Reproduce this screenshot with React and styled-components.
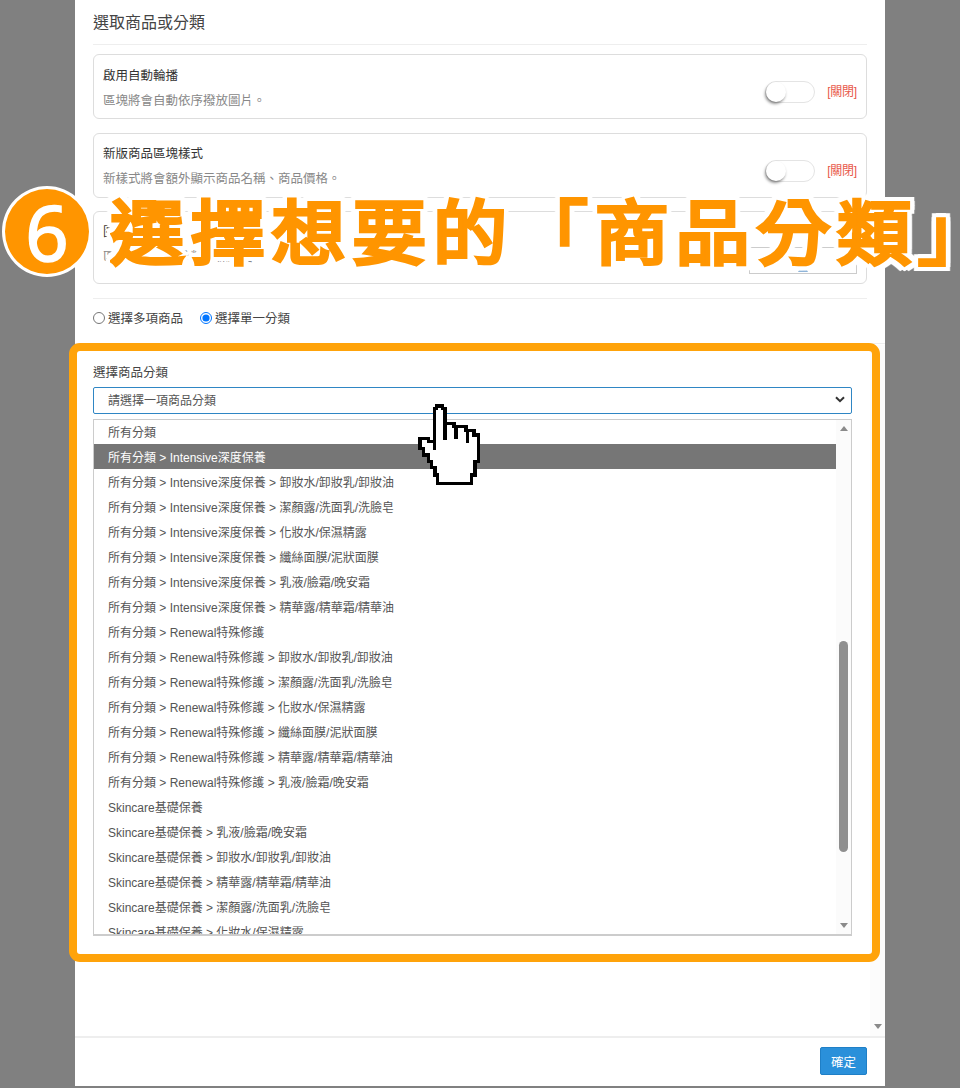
import React from "react";
import styled, { createGlobalStyle } from "styled-components";

const Global = createGlobalStyle`
  html, body { margin: 0; padding: 0; background: #808080; }
  body { width: 960px; height: 1088px; overflow: hidden; font-family: "Liberation Sans", "Noto Sans CJK TC", sans-serif; }
  * { box-sizing: border-box; }
`;

const Stage = styled.div`
  position: relative;
  width: 960px;
  height: 1088px;
  overflow: hidden;
  padding: 0 75px 2px;
`;
const Modal = styled.div`
  width: 810px;
  height: 1086px;
  background: #fff;
  display: flex;
  flex-direction: column;
`;
const Scroller = styled.div`
  flex: 1;
  min-height: 0;
  display: flex;
`;
const Body = styled.div`
  flex: 1;
  min-width: 0;
`;
const TopPane = styled.div`
  padding: 11px 18px 0;
  height: 344px;
  border-bottom: 1px solid #eee;
  margin-right: -15px;
`;
const TopInner = styled.div`
  width: 774px;
`;
const Title = styled.h2`
  margin: 0;
  height: 34px;
  font-size: 16px;
  line-height: 24px;
  font-weight: 400;
  color: #444;
  border-bottom: 1px solid #eee;
`;
const Card = styled.div`
  margin-top: ${(p) => p.$top}px;
  height: ${(p) => p.$h}px;
  border: 1px solid #ddd;
  border-radius: 6px;
  padding: ${(p) => p.$pad || 11}px 9px 0;
  display: flex;
  justify-content: space-between;
`;
const CardText = styled.div`
  font-size: 12.5px;
  line-height: 18px;
`;
const CardTitle = styled.div`
  color: #333;
`;
const CardDesc = styled.div`
  color: #888;
  margin-top: 7px;
`;
const ToggleWrap = styled.div`
  display: flex;
  align-items: center;
  gap: 12px;
  margin-top: ${(p) => p.$top}px;
  height: 22px;
`;
const Toggle = styled.div`
  width: 50px;
  height: 22px;
  border: 1px solid #e4e4e4;
  border-radius: 11px;
  background: #fff;
  display: flex;
`;
const Knob = styled.div`
  width: 20px;
  height: 20px;
  border-radius: 50%;
  background: #fff;
  box-shadow: -1px 2px 3px rgba(0, 0, 0, 0.45);
`;
const Off = styled.span`
  font-size: 12px;
  letter-spacing: -0.2px;
  line-height: 18px;
  color: #e8574a;
`;
const PickBox = styled.div`
  width: 108px;
  height: 27px;
  margin-top: 24px;
  border: 1px solid #ccc;
  display: flex;
  justify-content: center;
  align-items: flex-end;
`;
const Divider = styled.div`
  margin-top: 14px;
  border-top: 1px solid #eee;
`;
const RadioRow = styled.div`
  display: flex;
  gap: 17px;
  margin-top: 11px;
  height: 18px;
  align-items: center;
`;
const RadioLabel = styled.label`
  display: flex;
  align-items: center;
  gap: 3px;
  font-size: 12.5px;
  line-height: 18px;
  color: #444;
`;
const Radio = styled.input`
  margin: 0 0 2px;
  width: 12px;
  height: 12px;
`;
const Pane = styled.div`
  padding: 20px 18px 0;
`;
const FieldLabel = styled.div`
  font-size: 12.5px;
  line-height: 18px;
  color: #444;
`;
const Select = styled.div`
  margin-top: 5px;
  width: 759px;
  height: 27px;
  border: 1px solid #2f86c4;
  border-radius: 2px;
  padding: 0 6px 2px 14px;
  display: flex;
  align-items: center;
  justify-content: space-between;
  font-size: 12px;
  color: #555;
`;
const List = styled.div`
  margin-top: 5px;
  width: 759px;
  height: 517px;
  border: 1px solid #ccc;
  border-bottom-width: 2px;
  display: flex;
`;
const Options = styled.div`
  flex: 1;
  min-width: 0;
  overflow: hidden;
`;
const OptionStack = styled.div`
  margin-top: -1px;
`;
const Option = styled.div`
  height: 25px;
  line-height: 29px;
  padding-left: 14px;
  font-size: 12px;
  white-space: nowrap;
  overflow: hidden;
  color: ${(p) => (p.$active ? "#fff" : "#555")};
  background: ${(p) => (p.$active ? "#767676" : "transparent")};
`;
const Track = styled.div`
  width: 15px;
  background: #fbfbfb;
  display: flex;
  flex-direction: column;
  align-items: center;
  justify-content: space-between;
  padding: 6px 0;
  position: relative;
`;
const Arrow = styled.div`
  width: 0;
  height: 0;
  border-left: 4.5px solid transparent;
  border-right: 4.5px solid transparent;
  ${(p) => (p.$up ? "border-bottom: 5px solid #8a8a8a;" : "border-top: 5px solid #8a8a8a;")}
`;
const Thumb = styled.div`
  position: absolute;
  left: 3px;
  top: 221px;
  width: 9px;
  height: 211px;
  border-radius: 5px;
  background: #8f8f8f;
`;
const OuterTrack = styled.div`
  width: 15px;
  margin-top: 345px;
  background: #fcfcfc;
  display: flex;
  flex-direction: column;
  align-items: center;
  justify-content: flex-end;
  padding-bottom: 7px;
`;
const Footer = styled.div`
  height: 50px;
  border-top: 2px solid #eee;
  padding: 9px 18px 0;
  display: flex;
  justify-content: flex-end;
  align-items: flex-start;
`;
const Confirm = styled.button`
  width: 47px;
  height: 28px;
  padding: 0;
  background: #2a90da;
  border: 1px solid #1f7fc6;
  border-radius: 2px;
  color: #fff;
  font: inherit;
  font-size: 12.5px;
`;

/* annotation overlay */
const Frame = styled.div`
  position: absolute;
  left: 69px;
  top: 343px;
  width: 811px;
  height: 619px;
  border: 8px solid #ffa30a;
  border-radius: 11px;
  pointer-events: none;
`;
const Badge = styled.div`
  position: absolute;
  left: 2px;
  top: 186px;
  width: 90px;
  height: 91px;
  border-radius: 50%;
  background: #ff9500;
  border: 3px solid #fff;
  display: flex;
  align-items: center;
  justify-content: center;
  color: #fff;
  font-family: "Noto Sans", sans-serif;
  font-size: 76px;
  line-height: 1;
  font-weight: 400;
  -webkit-text-stroke: 1.5px #fff;
`;
const Headline = styled.div`
  position: absolute;
  left: 110px;
  top: 179px;
  white-space: nowrap;
  font-family: "Noto Sans CJK TC", sans-serif;
  font-size: 70px;
  line-height: 100px;
  letter-spacing: 6.2px;
  font-weight: 400;
  color: #ff9500;
  -webkit-text-stroke: 4px #ff9500;
  transform: scaleX(1.06);
  transform-origin: left center;
  filter: drop-shadow(4px 0 0 #fff) drop-shadow(-4px 0 0 #fff) drop-shadow(0 4px 0 #fff) drop-shadow(0 -4px 0 #fff);
`;
const Cursor = styled.svg`
  position: absolute;
  left: 380px;
  top: 380px;
`;

const P = "所有分類";
const I = `${P} > Intensive深度保養`;
const R = `${P} > Renewal特殊修護`;
const S = "Skincare基礎保養";
const options = [
  P,
  I,
  `${I} > 卸妝水/卸妝乳/卸妝油`,
  `${I} > 潔顏露/洗面乳/洗臉皂`,
  `${I} > 化妝水/保濕精露`,
  `${I} > 纖絲面膜/泥狀面膜`,
  `${I} > 乳液/臉霜/晚安霜`,
  `${I} > 精華露/精華霜/精華油`,
  R,
  `${R} > 卸妝水/卸妝乳/卸妝油`,
  `${R} > 潔顏露/洗面乳/洗臉皂`,
  `${R} > 化妝水/保濕精露`,
  `${R} > 纖絲面膜/泥狀面膜`,
  `${R} > 精華露/精華霜/精華油`,
  `${R} > 乳液/臉霜/晚安霜`,
  S,
  `${S} > 乳液/臉霜/晚安霜`,
  `${S} > 卸妝水/卸妝乳/卸妝油`,
  `${S} > 精華露/精華霜/精華油`,
  `${S} > 潔顏露/洗面乳/洗臉皂`,
  `${S} > 化妝水/保濕精露`,
];

const ToggleBlock = ({ top }) => (
  <ToggleWrap $top={top}>
    <Toggle>
      <Knob />
    </Toggle>
    <Off>[關閉]</Off>
  </ToggleWrap>
);

export default function App() {
  return (
    <>
      <Global />
      <Stage>
        <Modal>
          <Scroller>
            <Body>
              <TopPane>
                <TopInner>
                  <Title>選取商品或分類</Title>
                  <Card $top={9} $h={65} $pad={12}>
                    <CardText>
                      <CardTitle>啟用自動輪播</CardTitle>
                      <CardDesc>區塊將會自動依序撥放圖片。</CardDesc>
                    </CardText>
                    <ToggleBlock top={14} />
                  </Card>
                  <Card $top={14} $h={65}>
                    <CardText>
                      <CardTitle>新版商品區塊樣式</CardTitle>
                      <CardDesc>新樣式將會額外顯示商品名稱、商品價格。</CardDesc>
                    </CardText>
                    <ToggleBlock top={15} />
                  </Card>
                  <Card $top={13} $h={73}>
                    <CardText>
                      <CardTitle>圖片標題</CardTitle>
                      <CardDesc>區塊將會顯示分類的標題名。</CardDesc>
                    </CardText>
                    <PickBox>
                      <svg width="14" height="14" viewBox="0 0 14 14">
                        <path d="M2 13 L7 4 L12 13Z" fill="#8fb4d8" />
                      </svg>
                    </PickBox>
                  </Card>
                  <Divider />
                  <RadioRow>
                    <RadioLabel>
                      <Radio type="radio" name="m" readOnly />
                      選擇多項商品
                    </RadioLabel>
                    <RadioLabel>
                      <Radio type="radio" name="m" defaultChecked readOnly />
                      選擇單一分類
                    </RadioLabel>
                  </RadioRow>
                </TopInner>
              </TopPane>
              <Pane>
                <FieldLabel>選擇商品分類</FieldLabel>
                <Select>
                  請選擇一項商品分類
                  <svg width="10" height="7" viewBox="0 0 10 7">
                    <path d="M1 1.2 L5 5.2 L9 1.2" fill="none" stroke="#333" strokeWidth="2" />
                  </svg>
                </Select>
                <List>
                  <Options>
                    <OptionStack>
                      {options.map((o, i) => (
                        <Option key={i} $active={i === 1}>
                          {o}
                        </Option>
                      ))}
                    </OptionStack>
                  </Options>
                  <Track>
                    <Arrow $up />
                    <Thumb />
                    <Arrow />
                  </Track>
                </List>
              </Pane>
            </Body>
            <OuterTrack>
              <Arrow />
            </OuterTrack>
          </Scroller>
          <Footer>
            <Confirm>確定</Confirm>
          </Footer>
        </Modal>
        <Frame />
        <Badge>6</Badge>
        <Headline>選擇想要的「商品分類」</Headline>
        <Cursor width="130" height="120" viewBox="0 0 390 360" shapeRendering="crispEdges">
          <path
            d="M163 185 V85 H170 V78 H188 V85 H195 V130 H222 V140 H258 V152 H282 V165 H295 V245 H285 V285 H275 V310 H172 V285 H165 V262 H155 V245 H145 V225 H130 V205 H120 V175 H145 V185 Z"
            fill="#fff"
            stroke="#000"
            strokeWidth="10"
          />
          <path d="M163 185 V210 M195 130 V180 M228 140 V178 M262 152 V190" fill="none" stroke="#000" strokeWidth="10" />
        </Cursor>
      </Stage>
    </>
  );
}
